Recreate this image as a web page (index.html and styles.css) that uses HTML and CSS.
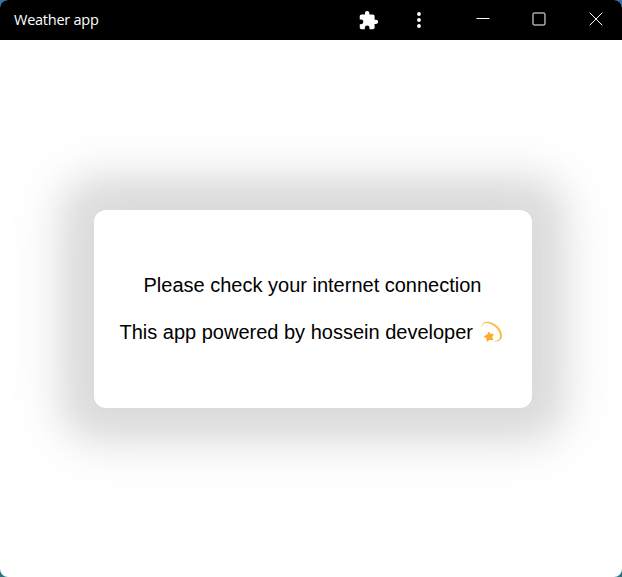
FILE: index.html
```html
<!DOCTYPE html>
<html lang="en">
<head>
<meta charset="utf-8">
<title>Weather app</title>
<link rel="stylesheet" href="styles.css">
</head>
<body>
<div class="window">
  <header class="titlebar">
    <span class="title">Weather app</span>
    <svg class="extension" viewBox="0 0 24 24"><path d="M20.5 11H19V7c0-1.100-.9-2-2-2h-4V3.500a2.500 2.500 0 0 0-5 0V5H4c-1.100 0-2 .9-2 2v3.800h1.500a2.700 2.700 0 0 1 0 5.400H2V20c0 1.100.9 2 2 2h3.800v-1.500a2.700 2.700 0 0 1 5.400 0V22H17c1.100 0 2-.9 2-2v-4h1.500a2.500 2.500 0 0 0 0-5z"/></svg>
    <svg class="more" viewBox="0 0 6 18"><circle cx="3" cy="3" r="1.900"/><circle cx="3" cy="9" r="1.900"/><circle cx="3" cy="15" r="1.900"/></svg>
    <svg class="control minimize" viewBox="0 0 14 14"><path d="M.5 6.500h13"/></svg>
    <svg class="control maximize" viewBox="0 0 14 14"><rect x="1" y="1" width="12" height="12" rx="1"/></svg>
    <svg class="control close" viewBox="0 0 14 14"><path d="M.7.700l12.600 12.600M13.300.700L.7 13.300"/></svg>
  </header>
  <main class="content">
    <section class="card">
      <p>Please check your internet connection</p>
      <p>This app powered by hossein developer <svg class="dizzy" viewBox="0 0 22 22"><path class="swirl" d="M.8 6.500C.4 2.300 3.500.3 7.500.8 14 1.500 20.700 7.500 21 14.200c.2 4.800-3.300 6.900-8.700 6.100 4.500-.2 6.800-2 6.500-5.700C18.400 8.800 12.500 2.900 7 2.200 3.500 1.700 1.700 3.100.8 6.500z"/><path class="star" d="M8 11.600l1.300 2.100 2.600-.2-1.400 2.400.9 2.600-2.700-.6-2.300 1.800-.3-2.800-2.400-1.500 2.800-1z"/></svg></p>
    </section>
  </main>
</div>
</body>
</html>
```
FILE: styles.css
```css
* { box-sizing: border-box; }
body {
  margin: 0;
  background: linear-gradient(#2d72b8, #287882);
}
.window {
  display: flex;
  flex-direction: column;
  height: 577px;
  overflow: hidden;
  border-radius: 8px;
  background: #fff;
}
.titlebar {
  display: flex;
  align-items: center;
  height: 40px;
  padding: 0 19px 0 14px;
  background: #000;
  color: #fff;
}
.title {
  width: 345px;
  padding-bottom: 2px;
  font: 14.500px "Open Sans", "Noto Sans", sans-serif;
  letter-spacing: -.25px;
}
.extension { width: 21px; height: 21px; fill: #fff; }
.more { width: 6px; height: 18px; margin: 0 54px 0 37px; fill: #fff; }
.control {
  width: 14px;
  height: 14px;
  margin-bottom: 3px;
  fill: none;
  stroke: #fff;
  stroke-width: 1;
}
.maximize { margin-left: 42px; }
.close { margin-left: 43px; }
.content { flex: 1; padding: 170px 90px 0 94px; }
.card {
  height: 198px;
  padding-top: 63px;
  border-radius: 12px;
  background: #fff;
  box-shadow: 0 0 34px 32px rgba(0, 0, 0, .085), 0 0 60px 38px rgba(0, 0, 0, .07);
  color: #000;
  text-align: center;
  font: 20px/24px "Liberation Sans", Arial, sans-serif;
}
.card p { margin: 0 1px 23px 0; white-space: nowrap; }
.card p + p { margin-right: 4px; }
.dizzy { width: 22px; height: 22px; margin-left: 2px; vertical-align: -4px; }
.swirl { fill: #fcc04a; }
.star { fill: #ffab2d; stroke: #ffab2d; stroke-width: 1.500; stroke-linejoin: round; }
```
